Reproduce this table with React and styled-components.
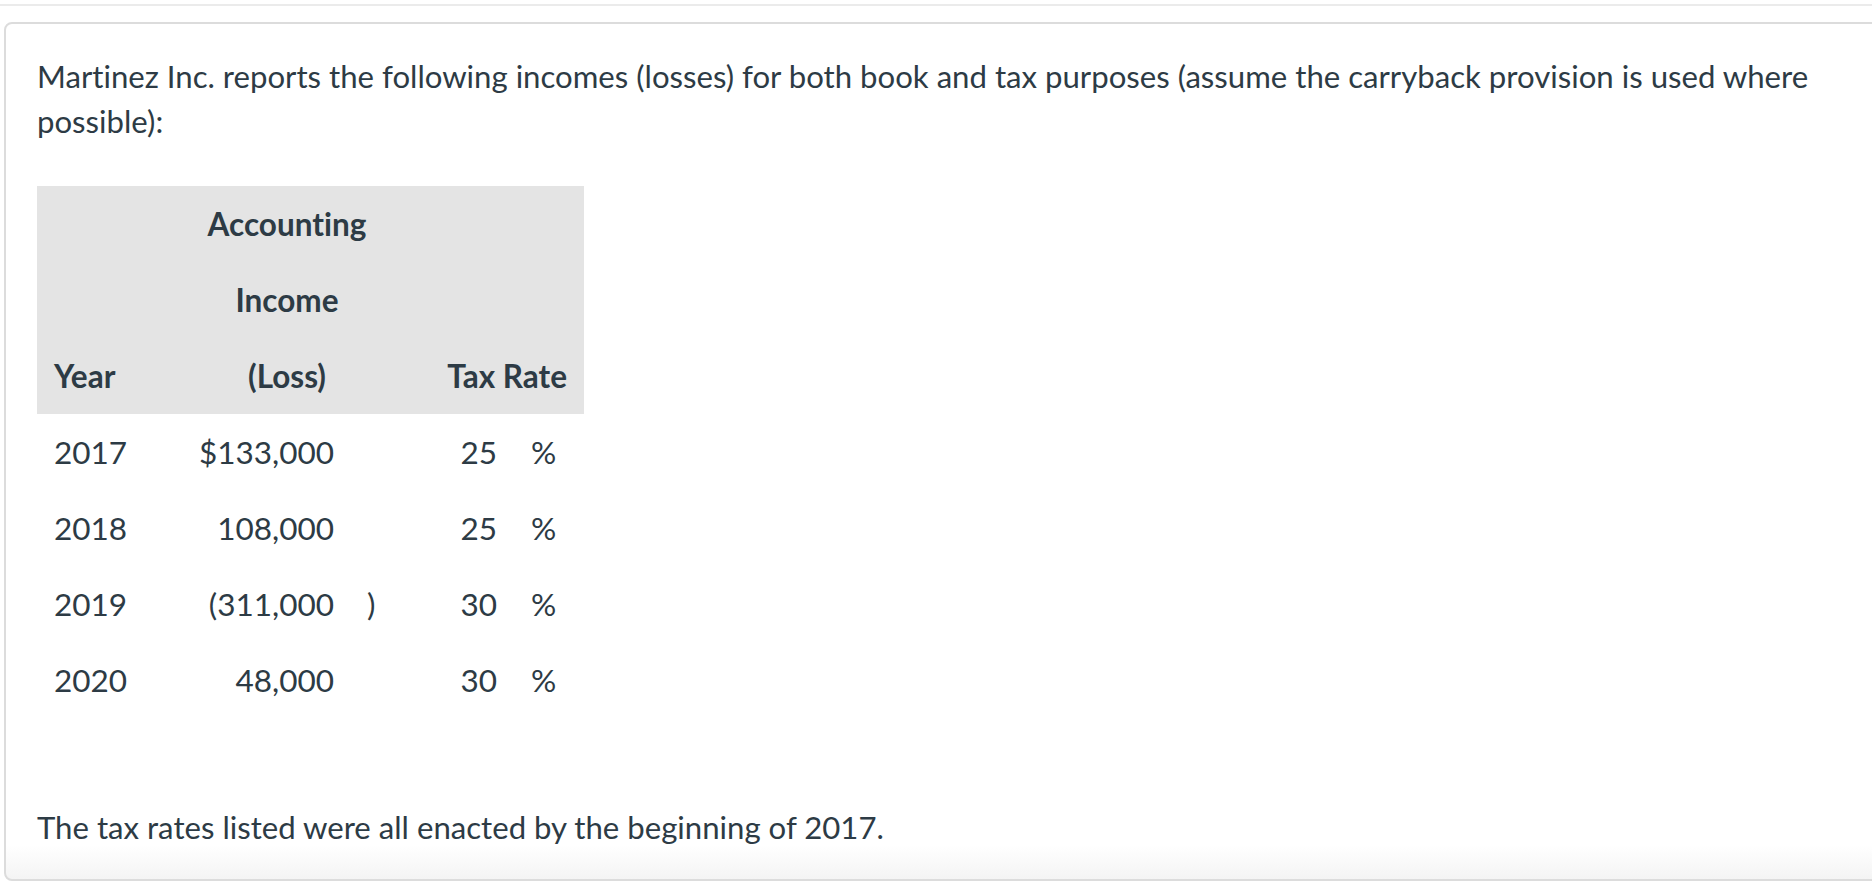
import React from 'react';
import styled, {createGlobalStyle} from 'styled-components';

const GlobalStyle = createGlobalStyle`
	html, body {
		margin: 0;
		padding: 0;
		background: #ffffff;
	}
	body {
		font-family: Lato, "Noto Sans", "Liberation Sans", sans-serif;
		color: #2d3b45;
		font-variant-ligatures: none;
	}
`;

const Page = styled.div`
	padding-top: 4px;
`;

const TopRule = styled.div`
	height: 2px;
	background: #ebebeb;
	margin-bottom: 16px;
`;

const Card = styled.div`
	margin-left: 4px;
	margin-right: -12px;
	border: 2px solid #dcdcdc;
	border-radius: 8px;
	background: linear-gradient(to bottom, #ffffff 0, #ffffff calc(100% - 34px), #f4f4f4 100%);
	padding: 30px 32px 29px 31px;
	box-sizing: border-box;
`;

const Text = styled.p`
	margin: 0;
	font-size: 31.15px;
	line-height: 45px;
	margin-top: ${props => props.$top || 0}px;
`;

const Table = styled.table`
	border-collapse: collapse;
	table-layout: fixed;
	width: 547px;
	margin-top: 42px;
	font-size: 31.5px;
`;

const HeadRow = styled.tr`
	background: #e4e4e4;
`;

const HeadCell = styled.th`
	font-weight: 700;
	line-height: 76px;
	padding: 0;
	vertical-align: bottom;
	white-space: nowrap;
	text-align: ${props => props.$align || 'left'};
	padding-left: ${props => props.$pl || 0}px;
	padding-right: ${props => props.$pr || 0}px;
`;

const Cell = styled.td`
	height: 76px;
	padding: 0;
	line-height: 76px;
	white-space: nowrap;
	text-align: ${props => props.$align || 'left'};
	padding-left: ${props => props.$pl || 0}px;
	padding-right: ${props => props.$pr || 0}px;
`;

const rows = [
	{year: '2017', amount: '$133,000', close: '', rate: '25'},
	{year: '2018', amount: '108,000', close: '', rate: '25'},
	{year: '2019', amount: '(311,000', close: ')', rate: '30'},
	{year: '2020', amount: '48,000', close: '', rate: '30'},
];

export default function App() {
	return (
		<>
			<GlobalStyle />
			<Page>
				<TopRule />
				<Card>
					<Text>
						Martinez Inc. reports the following incomes (losses) for both book and tax purposes
						(assume the carryback provision is used where possible):
					</Text>
					<Table>
						<colgroup>
							<col style={{width: '124px'}} />
							<col style={{width: '185px'}} />
							<col style={{width: '67px'}} />
							<col style={{width: '98px'}} />
							<col style={{width: '73px'}} />
						</colgroup>
						<thead>
							<HeadRow>
								<HeadCell $pl={17}>Year</HeadCell>
								<HeadCell colSpan={2} $align="center">
									Accounting
									<br />
									Income
									<br />
									(Loss)
								</HeadCell>
								<HeadCell colSpan={2} $align="right" $pr={17}>
									Tax Rate
								</HeadCell>
							</HeadRow>
						</thead>
						<tbody>
							{rows.map(row => (
								<tr key={row.year}>
									<Cell $pl={17}>{row.year}</Cell>
									<Cell $align="right" $pr={12}>{row.amount}</Cell>
									<Cell $pl={21}>{row.close}</Cell>
									<Cell $align="right" $pr={14}>{row.rate}</Cell>
									<Cell $pl={20}>%</Cell>
								</tr>
							))}
						</tbody>
					</Table>
					<Text $top={87}>The tax rates listed were all enacted by the beginning of 2017.</Text>
				</Card>
			</Page>
		</>
	);
}
